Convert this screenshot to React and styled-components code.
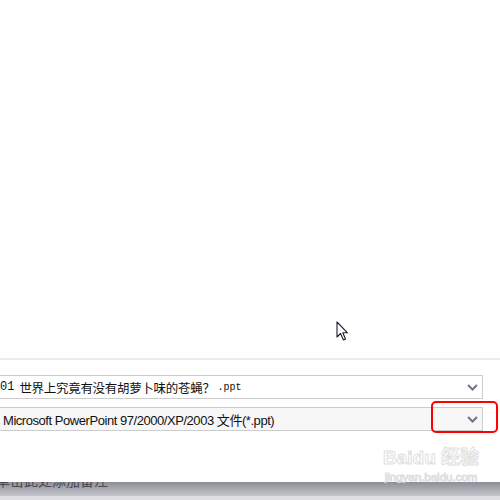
import React from 'react'
import styled, { createGlobalStyle } from 'styled-components'

const GlobalStyle = createGlobalStyle`
  html, body {
    margin: 0;
    padding: 0;
    background: #ffffff;
  }
`;

const Page = styled.div`
  position: relative;
  width: 500px;
  height: 500px;
  overflow: hidden;
  display: flex;
  flex-direction: column;
  background: #ffffff;
  font-family: "Liberation Sans", Arial, "Noto Sans CJK SC", sans-serif;
`;

const Blank = styled.div`
  position: relative;
  height: 358px;
  flex-shrink: 0;
`;

const Divider = styled.div`
  height: 2px;
  background: #ececee;
  flex-shrink: 0;
`;

const Form = styled.div`
  position: relative;
  display: flex;
  flex-direction: column;
  gap: 8px;
  padding-top: 15px;
  flex: 1;
`;

const Select = styled.div`
  box-sizing: border-box;
  position: relative;
  display: flex;
  align-items: center;
  width: 484px;
  height: 24px;
  margin-left: -1px;
  padding-left: ${({ $pad }) => $pad}px;
  border: 1px solid #cccccc;
  background: ${({ $bg }) => $bg};
  color: #111111;
  white-space: nowrap;
`;

const CjkText = styled.span`
  font-family: "Noto Sans CJK SC", sans-serif;
  font-size: 12.5px;
  letter-spacing: -0.3px;
`;

const Number = styled.span`
  font-family: "Liberation Mono", monospace;
  font-size: 12px;
  margin-right: 5px;
`;

const MonoText = styled.span`
  font-family: "Liberation Mono", monospace;
  font-size: 10px;
  margin-left: 3px;
`;

const PlainText = styled.span`
  font-family: "Liberation Sans", Arial, "Noto Sans CJK SC", sans-serif;
  font-size: 13px;
  letter-spacing: -0.45px;
`;

const Chevron = styled.svg`
  position: absolute;
  right: 4px;
  top: 50%;
  margin-top: -3px;
`;

const Highlight = styled.div`
  position: absolute;
  left: 431px;
  top: 41px;
  width: 67px;
  height: 32px;
  border: 2px solid #ff0000;
  border-radius: 5px;
  box-sizing: border-box;
`;

const Footer = styled.div`
  height: 14px;
  flex-shrink: 0;
  overflow: hidden;
  background: linear-gradient(#8e8e98, #c4c4cc);
`;

const NoteText = styled.div`
  margin-top: -10px;
  margin-left: -4px;
  font-family: "Noto Sans CJK SC", sans-serif;
  font-size: 14px;
  line-height: 16px;
  color: #4a4a52;
`;

const BottomEdge = styled.div`
  height: 4px;
  flex-shrink: 0;
  background: #dedee2;
`;

const Cursor = styled.svg`
  position: absolute;
  left: 336px;
  top: 321px;
`;

const Watermark = styled.div`
  position: absolute;
  left: 383px;
  top: 446px;
  display: flex;
  flex-direction: column;
  align-items: center;
  color: rgba(255, 255, 255, 0.9);
  -webkit-text-stroke: 1px rgba(190, 190, 190, 0.5);
  font-family: "Liberation Sans", Arial, "Noto Sans CJK SC", sans-serif;
  pointer-events: none;
`;

const MarkTop = styled.div`
  font-size: 19px;
  font-weight: 700;
  line-height: 24px;
`;

const MarkBottom = styled.div`
  font-size: 11.5px;
  line-height: 15px;
`;

const ChevronIcon = () => (
  <Chevron width="11" height="7" viewBox="0 0 11 7">
    <path d="M1 1 L5.5 5.5 L10 1" fill="none" stroke="#6f7680" strokeWidth="2" />
  </Chevron>
);

const App = () => {
  return (
    <Page>
      <GlobalStyle />
      <Blank>
        <Cursor width="14" height="21" viewBox="0 0 14 21">
          <path
            d="M1 1 L1 16 L4.5 12.5 L7.5 19 L9.5 18 L6.8 11.8 L11.5 11.8 Z"
            fill="#ffffff"
            stroke="#1c1c2c"
            strokeWidth="1.1"
            strokeLinejoin="round"
          />
        </Cursor>
      </Blank>
      <Divider />
      <Form>
        <Select $bg="#ffffff" $pad={0}>
          <Number>01</Number>
          <CjkText>世界上究竟有没有胡萝卜味的苍蝇？</CjkText>
          <MonoText>.ppt</MonoText>
          <ChevronIcon />
        </Select>
        <Select $bg="#f7f7f7" $pad={3}>
          <PlainText>Microsoft PowerPoint 97/2000/XP/2003 文件(*.ppt)</PlainText>
          <ChevronIcon />
        </Select>
        <Highlight />
      </Form>
      <Footer>
        <NoteText>单击此处添加备注</NoteText>
      </Footer>
      <BottomEdge />
      <Watermark>
        <MarkTop>Baidu 经验</MarkTop>
        <MarkBottom>jingyan.baidu.com</MarkBottom>
      </Watermark>
    </Page>
  );
};

export default App
